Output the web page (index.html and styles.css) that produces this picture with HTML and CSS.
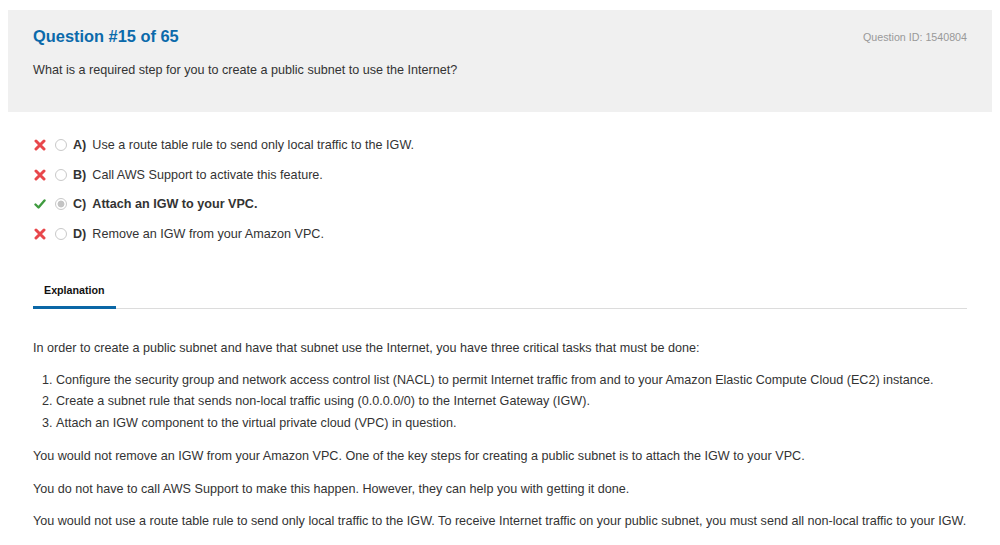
FILE: index.html
```html
<!DOCTYPE html>
<html>
<head>
<meta charset="utf-8">
<link rel="stylesheet" href="styles.css">
</head>
<body>
<div class="question-box">
  <div class="q-head">
    <h1 class="q-title">Question #15 of 65</h1>
    <span class="q-id">Question ID: 1540804</span>
  </div>
  <p class="q-text">What is a required step for you to create a public subnet to use the Internet?</p>
</div>

<div class="content">
  <ul class="options">
    <li class="option">
      <svg class="mark" viewBox="0 0 12 12" width="12" height="12"><path d="M2 2 L10 10 M10 2 L2 10" stroke="#e8474b" stroke-width="3" stroke-linecap="round"/></svg>
      <span class="radio"></span>
      <span class="letter">A)</span>
      <span class="opt-text">Use a route table rule to send only local traffic to the IGW.</span>
    </li>
    <li class="option">
      <svg class="mark" viewBox="0 0 12 12" width="12" height="12"><path d="M2 2 L10 10 M10 2 L2 10" stroke="#e8474b" stroke-width="3" stroke-linecap="round"/></svg>
      <span class="radio"></span>
      <span class="letter">B)</span>
      <span class="opt-text">Call AWS Support to activate this feature.</span>
    </li>
    <li class="option correct">
      <svg class="mark" viewBox="0 0 12 12" width="12" height="12"><path d="M1.5 6.5 L4.5 9.5 L10.5 2.5" fill="none" stroke="#3f9b3f" stroke-width="2.4" stroke-linecap="round" stroke-linejoin="round"/></svg>
      <span class="radio checked"></span>
      <span class="letter">C)</span>
      <span class="opt-text">Attach an IGW to your VPC.</span>
    </li>
    <li class="option">
      <svg class="mark" viewBox="0 0 12 12" width="12" height="12"><path d="M2 2 L10 10 M10 2 L2 10" stroke="#e8474b" stroke-width="3" stroke-linecap="round"/></svg>
      <span class="radio"></span>
      <span class="letter">D)</span>
      <span class="opt-text">Remove an IGW from your Amazon VPC.</span>
    </li>
  </ul>

  <div class="tabs">
    <span class="tab active">Explanation</span>
  </div>

  <div class="explanation">
    <p class="lead">In order to create a public subnet and have that subnet use the Internet, you have three critical tasks that must be done:</p>
    <ol>
      <li>Configure the security group and network access control list (NACL) to permit Internet traffic from and to your Amazon Elastic Compute Cloud (EC2) instance.</li>
      <li>Create a subnet rule that sends non-local traffic using (0.0.0.0/0) to the Internet Gateway (IGW).</li>
      <li>Attach an IGW component to the virtual private cloud (VPC) in question.</li>
    </ol>
    <p>You would not remove an IGW from your Amazon VPC. One of the key steps for creating a public subnet is to attach the IGW to your VPC.</p>
    <p>You do not have to call AWS Support to make this happen. However, they can help you with getting it done.</p>
    <p>You would not use a route table rule to send only local traffic to the IGW. To receive Internet traffic on your public subnet, you must send all non-local traffic to your IGW.</p>
  </div>
</div>
</body>
</html>
```

FILE: styles.css
```css
html, body {
  margin: 0;
  padding: 0;
  background: #fff;
}
body {
  padding: 10px 8px 0 8px;
  font-family: "Liberation Sans", Arial, Helvetica, sans-serif;
  color: #333;
  font-size: 12.6px;
}
.question-box {
  background: #f0f0f0;
  padding: 14px 25px 0 25px;
  height: 88px;
}
.q-head {
  display: flex;
  justify-content: space-between;
  align-items: center;
}
.q-title {
  margin: 0;
  font-size: 16.4px;
  line-height: 20px;
  font-weight: bold;
  color: #0b6aab;
}
.q-id {
  font-size: 10.7px;
  color: #999;
  line-height: 20px;
  margin-top: 3px;
}
.q-text {
  margin: 13px 0 0 0;
  line-height: 20px;
}
.content {
  padding: 0 25px;
}
.options {
  list-style: none;
  margin: 0;
  padding: 23px 0 0 0;
}
.option {
  display: flex;
  align-items: center;
  height: 20px;
  margin-bottom: 9.67px;
  line-height: 20px;
}
.mark {
  margin-left: 1px;
  flex: none;
}
.radio {
  box-sizing: border-box;
  width: 12px;
  height: 12px;
  border-radius: 50%;
  border: 1px solid #c9c9c9;
  background: #fff;
  margin-left: 9px;
  flex: none;
}
.radio.checked {
  background: radial-gradient(circle, #c4c4c4 0 3.2px, #fff 3.7px);
}
.letter {
  font-weight: bold;
  margin-left: 6px;
}
.opt-text {
  margin-left: 6px;
}
.correct .opt-text {
  font-weight: bold;
}
.tabs {
  margin-top: 34px;
  border-bottom: 1px solid #dcdcdc;
  display: flex;
}
.tab {
  font-size: 10.7px;
  font-weight: bold;
  color: #111;
  padding: 5px 11px 9px 11px;
  line-height: 14px;
  margin-bottom: -1px;
}
.tab.active {
  border-bottom: 3px solid #0b67a6;
}
.explanation {
  padding-top: 29px;
}
.explanation p {
  margin: 0 0 12.5px 0;
  line-height: 20px;
}
.explanation p.lead {
  margin-bottom: 12px;
}
.explanation ol {
  margin: 0 0 12px 0;
  padding-left: 23px;
}
.explanation ol li {
  line-height: 21.5px;
}
```
